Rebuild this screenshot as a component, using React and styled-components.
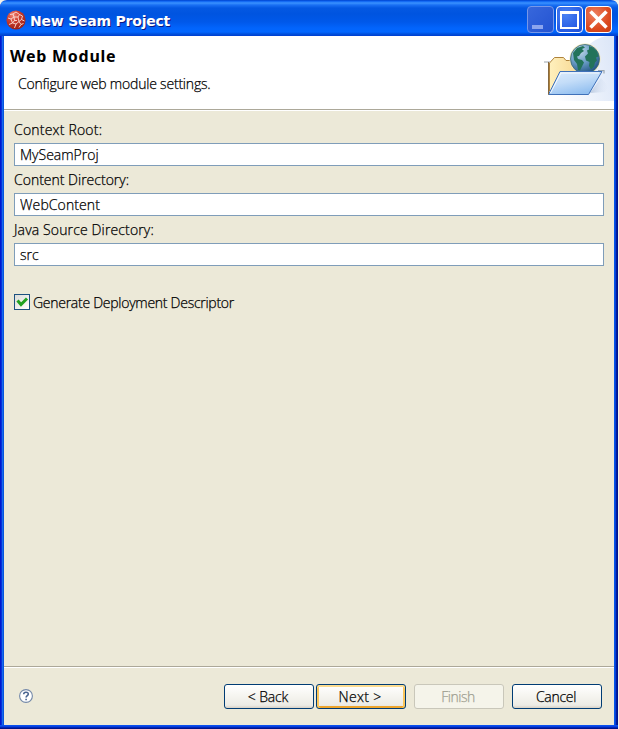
import React from 'react';
import styled, { createGlobalStyle } from 'styled-components';

const GlobalStyle = createGlobalStyle`
  * { box-sizing: border-box; }
  html, body { margin: 0; height: 100%; overflow: hidden; background: #ece9d8; }
  body, button, input { font-family: "Open Sans", "Noto Sans", sans-serif; font-size: 14px; font-weight: 300; color: #000; }
`;

const Desktop = styled.div`
  width: 619px;
  height: 729px;
  padding-right: 1px;
  background: #f3f1ea;
`;

const Window = styled.div`
  width: 618px;
  height: 729px;
  display: flex;
  flex-direction: column;
  border-radius: 7px 7px 0 0;
  overflow: hidden;
  background:
    linear-gradient(to bottom, #0a50ee 0 1px, #0840e0 1px 2px, #0026b8 2px 3px, #00138c 3px 4px) 0 100% / 100% 4px no-repeat,
    linear-gradient(to right, #0019cf 0 1px, #0831d9 1px 2px, #166aee 2px 3px, #0855dd 3px 4px) 0 0 / 4px 100% no-repeat,
    linear-gradient(to right, #0455e8 0 1px, #0441d8 1px 2px, #001da0 2px 3px, #00138c 3px 4px) 100% 0 / 4px 100% no-repeat;
`;

const TitleBar = styled.div`
  flex: 0 0 36px;
  display: flex;
  align-items: center;
  padding: 3px 6px 0 6px;
  background: linear-gradient(to bottom, #0040c8 0, #0a5ff0 1px, #3a92ff 3px, #1a70f4 5px, #0458e2 8px, #0054e0 14px, #0058ea 22px, #0264fc 28px, #0266ff 32px, #0050dc 34px, #003dd0 36px);
`;

const Title = styled.span`
  flex: 1;
  margin: 2px 0 0 4px;
  font: 700 14px/20px "DejaVu Sans", sans-serif;
  letter-spacing: ${({ $track }) => $track}px;
  color: #fff;
  text-shadow: 1px 1px 0 #0a1883;
  white-space: nowrap;
`;

const CaptionButtons = styled.div`
  display: flex;
  gap: 2px;
`;

const CaptionButton = styled.button`
  width: 27px;
  height: 27px;
  padding: 0;
  display: grid;
  place-items: center;
  border: 1px solid ${({ $edge }) => $edge || '#fff'};
  border-radius: 4px;
  background: ${({ $fill }) => $fill};
`;

const Body = styled.main`
  flex: 1;
  margin: 0 4px 4px;
  display: flex;
  flex-direction: column;
  background: #ece9d8;
`;

const Banner = styled.header`
  flex: 0 0 74px;
  display: flex;
  justify-content: space-between;
  background: #fff;
  border-bottom: 1px solid #aca899;
  box-shadow: 0 1px 0 #fff;
`;

const BannerText = styled.div`
  padding: 9px 0 0 6px;
`;

const Heading = styled.h1`
  margin: 0;
  font: 700 16px/22px "Noto Sans", sans-serif;
  letter-spacing: ${({ $track }) => $track}px;
`;

const Text = styled.span`
  display: block;
  line-height: 20px;
  letter-spacing: ${({ $track = 0 }) => $track}px;
  white-space: nowrap;
  -webkit-text-stroke: 0.25px currentColor;
`;

const Subtitle = styled(Text)`
  margin: 7px 0 0 8px;
`;

const Form = styled.div`
  flex: 1;
  padding: 10px 10px 0;
`;

const Field = styled.label`
  display: block;
  height: 50px;
`;

const Input = styled.input`
  display: block;
  width: 590px;
  height: 23px;
  margin-top: 3px;
  padding: 0 5px;
  border: 1px solid #7f9db9;
  border-radius: 0;
  outline: 0;
  background: #fff;
  letter-spacing: ${({ $track }) => $track}px;
  -webkit-text-stroke: 0.25px currentColor;
`;

const CheckRow = styled.label`
  display: flex;
  align-items: center;
  gap: 3px;
  margin-top: 22px;
  height: 20px;
`;

const CheckLabel = styled(Text)`
  padding-top: 2px;
`;

const CheckBox = styled.span`
  width: 16px;
  height: 16px;
  display: grid;
  place-items: center;
  border: 1px solid #1c5180;
  background: linear-gradient(135deg, #dcdcd7, #fff);
`;

const Footer = styled.footer`
  flex: 0 0 59px;
  display: flex;
  align-items: center;
  padding: 0 12px 0 15px;
  border-top: 1px solid #aca899;
  box-shadow: inset 0 1px 0 #fff;
`;

const ButtonRow = styled.div`
  margin-left: auto;
  display: flex;
`;

const PushButton = styled.button`
  width: 90px;
  height: 25px;
  margin-left: ${({ $gap = 0 }) => $gap}px;
  padding: 1px 2px 0 0;
  display: flex;
  align-items: center;
  justify-content: center;
  border: 1px solid ${({ disabled }) => (disabled ? '#c9c7ba' : '#003c74')};
  border-radius: 3px;
  color: ${({ disabled }) => (disabled ? '#a1a192' : '#000')};
  background: ${({ disabled }) => (disabled ? '#f5f4ea' : 'linear-gradient(#fff, #f5f4ef 50%, #ecebe5 88%, #d8d0c4)')};
  box-shadow: ${({ $primary }) => ($primary ? 'inset 0 2px 0 #fcdc90, inset 2px 0 0 #fac65c, inset -2px 0 0 #fac65c, inset 0 -2px 0 #eca42c' : 'none')};
`;

const SeamIcon = () => (
  <svg width="20" height="20" viewBox="0 0 20 20">
    <defs>
      <radialGradient id="seam" cx=".35" cy=".25" r=".8">
        <stop offset="0" stopColor="#f08878" /><stop offset=".4" stopColor="#d04030" /><stop offset="1" stopColor="#961c14" />
      </radialGradient>
    </defs>
    <circle cx="10" cy="10" r="9.600" fill="url(#seam)" />
    <g fill="none" stroke="#fbdcd6" strokeWidth=".9">
      <path d="M4 4.500 7 4l1 3-3 2-3-1M7 4l3-2 3.500 2.500L12 7H8M13.500 4.500l3 1.500-1 3.500 3 1.500M5 9l1.500 4L3 14.500M6.500 13l3.500 1-1.500 4M10 14l3-2.500 2.500-2M13 11.500l2 3-2 3M15 14.500l2.500-1" />
      <path d="M8 7l.5 3.500-2 2.500M12 7l1 4.500M8.500 10.500H11" />
    </g>
  </svg>
);

const BannerArt = () => (
  <svg width="78" height="73" viewBox="536 36 78 73">
    <defs>
      <linearGradient id="glow" x1="0" y1=".5" x2="1" y2=".3"><stop offset=".1" stopColor="#fff" /><stop offset="1" stopColor="#dde7f8" /></linearGradient>
      <linearGradient id="paper" x1="0" y1="0" x2="1" y2="0"><stop offset="0" stopColor="#fff0bd" /><stop offset="1" stopColor="#f3cf83" /></linearGradient>
      <linearGradient id="folder" x1="0" y1="0" x2=".5" y2="1"><stop offset="0" stopColor="#ddecfc" /><stop offset=".5" stopColor="#c4ddf8" /><stop offset="1" stopColor="#93c0f0" /></linearGradient>
      <radialGradient id="sea" cx=".32" cy=".22" r=".85"><stop offset="0" stopColor="#c0d8e8" /><stop offset=".5" stopColor="#6a9dc6" /><stop offset="1" stopColor="#1c4f80" /></radialGradient>
      <linearGradient id="shade" x1="0" y1="0" x2="1" y2="0"><stop offset="0" stopColor="#8ba3c4" /><stop offset="1" stopColor="#d5e1f5" stopOpacity="0" /></linearGradient>
    </defs>
    <path d="M614 36v65h-72c30-3 29-61 66-65z" fill="url(#glow)" />
    <path d="m590 93 11-15 8 9-4 5z" fill="url(#shade)" opacity=".5" />
    <path d="M549.500 91V63l5-5.500h9l2.500 3H590V90z" fill="url(#paper)" stroke="#ae823b" />
    <path d="M544 62h6" stroke="#9ba5ae" />
    <circle cx="585" cy="59" r="15.500" fill="#f4e9b8" />
    <circle cx="585" cy="59" r="14.500" fill="url(#sea)" stroke="#3c6a72" strokeWidth=".8" />
    <g fill="#23735a">
      <path d="m573 53 4-5 6-2 2 1.500-3 1.500 2 2-3 2-2 3-2 .5 1 2.500 4 1 2 2.500-2 4-2 4-2-.5-1-6-3-4z" />
      <path d="m589 46 4 1.500 4 4 1.500 5-2.500 1 1 3-2 2-1 4-3 3-2-3.500.5-4-3.500-1.500-1-4 3-3-1-3 2-1z" />
    </g>
    <path d="M548.500 94.500 560 71.500h42L588.500 94.500z" fill="url(#folder)" stroke="#3f71b9" />
    <path d="M550.500 93 561 73h38" fill="none" stroke="#fff" opacity=".8" />
    <path d="M548.500 94.500V62" stroke="#86683e" />
    <path d="M598 70.500h6v3" fill="none" stroke="#9ba5ae" strokeWidth="1.200" />
  </svg>
);

const HelpIcon = () => (
  <svg width="14" height="14" viewBox="0 0 14 14">
    <circle cx="7" cy="7" r="6.400" fill="#fff" stroke="#7388a8" strokeWidth="1.100" />
    <path d="M4.700 5.300C4.700 2.600 9.300 2.500 9.300 5.100 9.300 6.700 7.100 6.800 7.100 8.600M7.100 9.700v1.500" fill="none" stroke="#4a6591" strokeWidth="1.600" />
  </svg>
);

const blue = 'radial-gradient(circle at 35% 30%, #4a82f2, #2a60e6 60%, #1c4cd4)';

const fields = [
  { label: 'Context Root:', value: 'MySeamProj', track: 0.2, valueTrack: 0 },
  { label: 'Content Directory:', value: 'WebContent', track: 0, valueTrack: 0.1 },
  { label: 'Java Source Directory:', value: 'src', track: 0.14, valueTrack: 0 },
];

export default function App() {
  return (
    <Desktop>
      <GlobalStyle />
      <Window>
        <TitleBar>
          <SeamIcon />
          <Title $track={-0.22}>New Seam Project</Title>
          <CaptionButtons>
            <CaptionButton $edge="#7797e8" $fill="linear-gradient(135deg, #3767dc, #2454d2)" aria-label="Minimize">
              <svg width="25" height="25"><path d="M4 18h11v4H4z" fill="#8ca5ee" /></svg>
            </CaptionButton>
            <CaptionButton $fill={blue} aria-label="Maximize">
              <svg width="25" height="25"><path d="M4 5h17v16H4z" fill="none" stroke="#fff" strokeWidth="2" /><path d="M3 4h19v3H3z" fill="#fff" /></svg>
            </CaptionButton>
            <CaptionButton $fill="radial-gradient(circle at 35% 30%, #ee8060, #dc4a20 60%, #c63c12)" aria-label="Close">
              <svg width="25" height="25"><path d="m4.500 4.500 16 16m0-16-16 16" stroke="#fff" strokeWidth="3.600" /></svg>
            </CaptionButton>
          </CaptionButtons>
        </TitleBar>
        <Body>
          <Banner>
            <BannerText>
              <Heading $track={0.75}>Web Module</Heading>
              <Subtitle $track={-0.2}>Configure web module settings.</Subtitle>
            </BannerText>
            <BannerArt />
          </Banner>
          <Form>
            {fields.map((f) => (
              <Field key={f.label}>
                <Text $track={f.track}>{f.label}</Text>
                <Input defaultValue={f.value} $track={f.valueTrack} />
              </Field>
            ))}
            <CheckRow>
              <CheckBox>
                <svg width="14" height="14"><path d="m2.500 5.500 3.500 4 6-6" fill="none" stroke="#21a121" strokeWidth="3" /></svg>
              </CheckBox>
              <CheckLabel $track={-0.27}>Generate Deployment Descriptor</CheckLabel>
            </CheckRow>
          </Form>
          <Footer>
            <HelpIcon />
            <ButtonRow>
              <PushButton><Text $track={-0.15}>&lt; Back</Text></PushButton>
              <PushButton $gap={2} $primary><Text $track={0.3}>Next &gt;</Text></PushButton>
              <PushButton $gap={8} disabled><Text $track={-0.5}>Finish</Text></PushButton>
              <PushButton $gap={8}><Text $track={-0.3}>Cancel</Text></PushButton>
            </ButtonRow>
          </Footer>
        </Body>
      </Window>
    </Desktop>
  );
}
